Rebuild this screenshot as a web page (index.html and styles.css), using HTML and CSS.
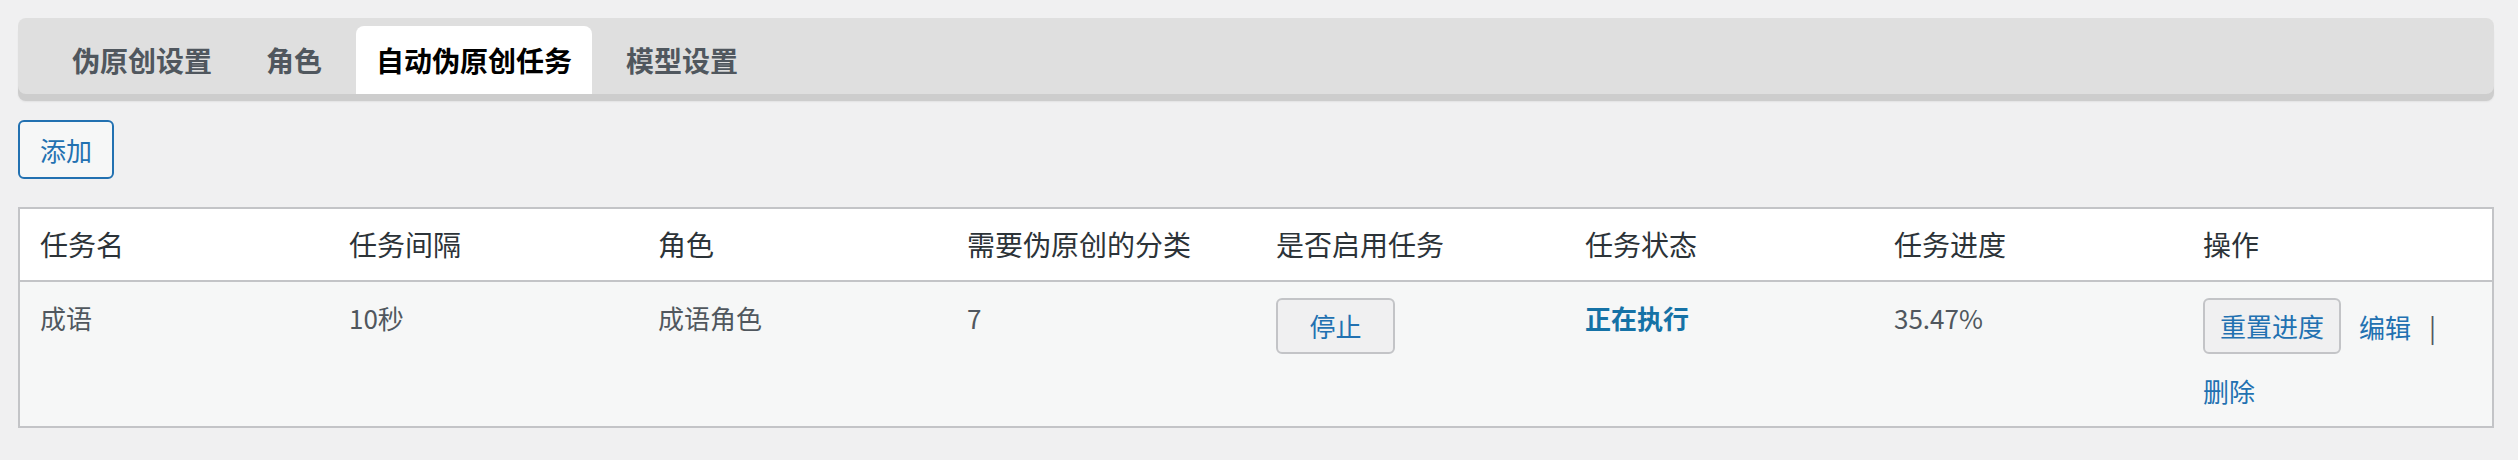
FILE: index.html
```html
<!DOCTYPE html>
<html lang="zh-CN">
<head>
<meta charset="utf-8">
<title>自动伪原创任务</title>
<link rel="stylesheet" href="styles.css">
</head>
<body>
<div class="wrap">
  <nav class="tabbar">
    <a class="tab">伪原创设置</a>
    <a class="tab">角色</a>
    <a class="tab active">自动伪原创任务</a>
    <a class="tab">模型设置</a>
  </nav>
  <div class="toolbar">
    <button class="btn btn-primary-outline">添加</button>
  </div>
  <table class="tasks">
    <thead>
      <tr>
        <th>任务名</th>
        <th>任务间隔</th>
        <th>角色</th>
        <th>需要伪原创的分类</th>
        <th>是否启用任务</th>
        <th>任务状态</th>
        <th>任务进度</th>
        <th>操作</th>
      </tr>
    </thead>
    <tbody>
      <tr>
        <td>成语</td>
        <td>10秒</td>
        <td>成语角色</td>
        <td>7</td>
        <td><button class="btn btn-stop">停止</button></td>
        <td><span class="status">正在执行</span></td>
        <td>35.47%</td>
        <td>
          <div class="actions-row">
            <button class="btn btn-reset">重置进度</button>
            <a class="link">编辑</a>
            <span class="sep">|</span>
          </div>
          <div class="actions-del"><a class="link">删除</a></div>
        </td>
      </tr>
    </tbody>
  </table>
</div>
</body>
</html>
```

FILE: styles.css
```css
* { box-sizing: border-box; }

html, body {
  margin: 0;
  padding: 0;
  background: #f0f0f1;
  font-family: "Noto Sans CJK SC", "Noto Sans", "Liberation Sans", sans-serif;
}

.wrap {
  padding: 18px 24px 0 18px;
}

.tabbar {
  display: flex;
  gap: 14px;
  height: 76px;
  padding: 8px 32px 0 34px;
  background: #dfdfdf;
  border-radius: 8px;
  box-shadow: 0 7px 0 #cdcdcd, 0 8px 2px rgba(0,0,0,0.06);
}

.tab {
  display: block;
  height: 68px;
  line-height: 68px;
  padding: 0 20px;
  font-size: 28px;
  font-weight: 700;
  color: #50575e;
  border-radius: 8px 8px 0 0;
  cursor: pointer;
}

.tab.active {
  background: #ffffff;
  color: #000000;
}

.toolbar {
  margin-top: 26px;
}

.btn {
  font-family: inherit;
  font-size: 26px;
  height: 56px;
  line-height: 52px;
  border: 2px solid #c3c4c7;
  border-radius: 6px;
  background: #f0f0f1;
  color: #2271b1;
  cursor: pointer;
  padding: 0 15px;
  margin: 0;
}

.btn-primary-outline {
  height: 59px;
  line-height: 55px;
  padding: 0 20px;
  border-color: #2271b1;
  background: #f6f7f7;
}

.btn-stop {
  width: 119px;
  padding: 0;
  text-align: center;
}

.tasks {
  margin-top: 28px;
  width: 2476px;
  table-layout: fixed;
  border-collapse: separate;
  border-spacing: 0;
  border: 2px solid #c3c4c7;
  background: #f6f7f7;
}

.tasks th {
  background: #ffffff;
  text-align: left;
  font-weight: 400;
  font-size: 28px;
  line-height: 39px;
  color: #2c3338;
  padding: 16px 20px;
  border-bottom: 2px solid #c3c4c7;
}

.tasks td {
  vertical-align: top;
  font-size: 26px;
  line-height: 39px;
  color: #50575e;
  padding: 16px 20px;
}

.status {
  font-weight: 700;
  color: #1572a6;
}

.actions-row {
  display: flex;
  align-items: center;
  gap: 18px;
  height: 56px;
}

.link {
  color: #2271b1;
  font-size: 26px;
  cursor: pointer;
}

.sep {
  color: #50575e;
}

.actions-del {
  margin-top: 17px;
  line-height: 39px;
}
```
